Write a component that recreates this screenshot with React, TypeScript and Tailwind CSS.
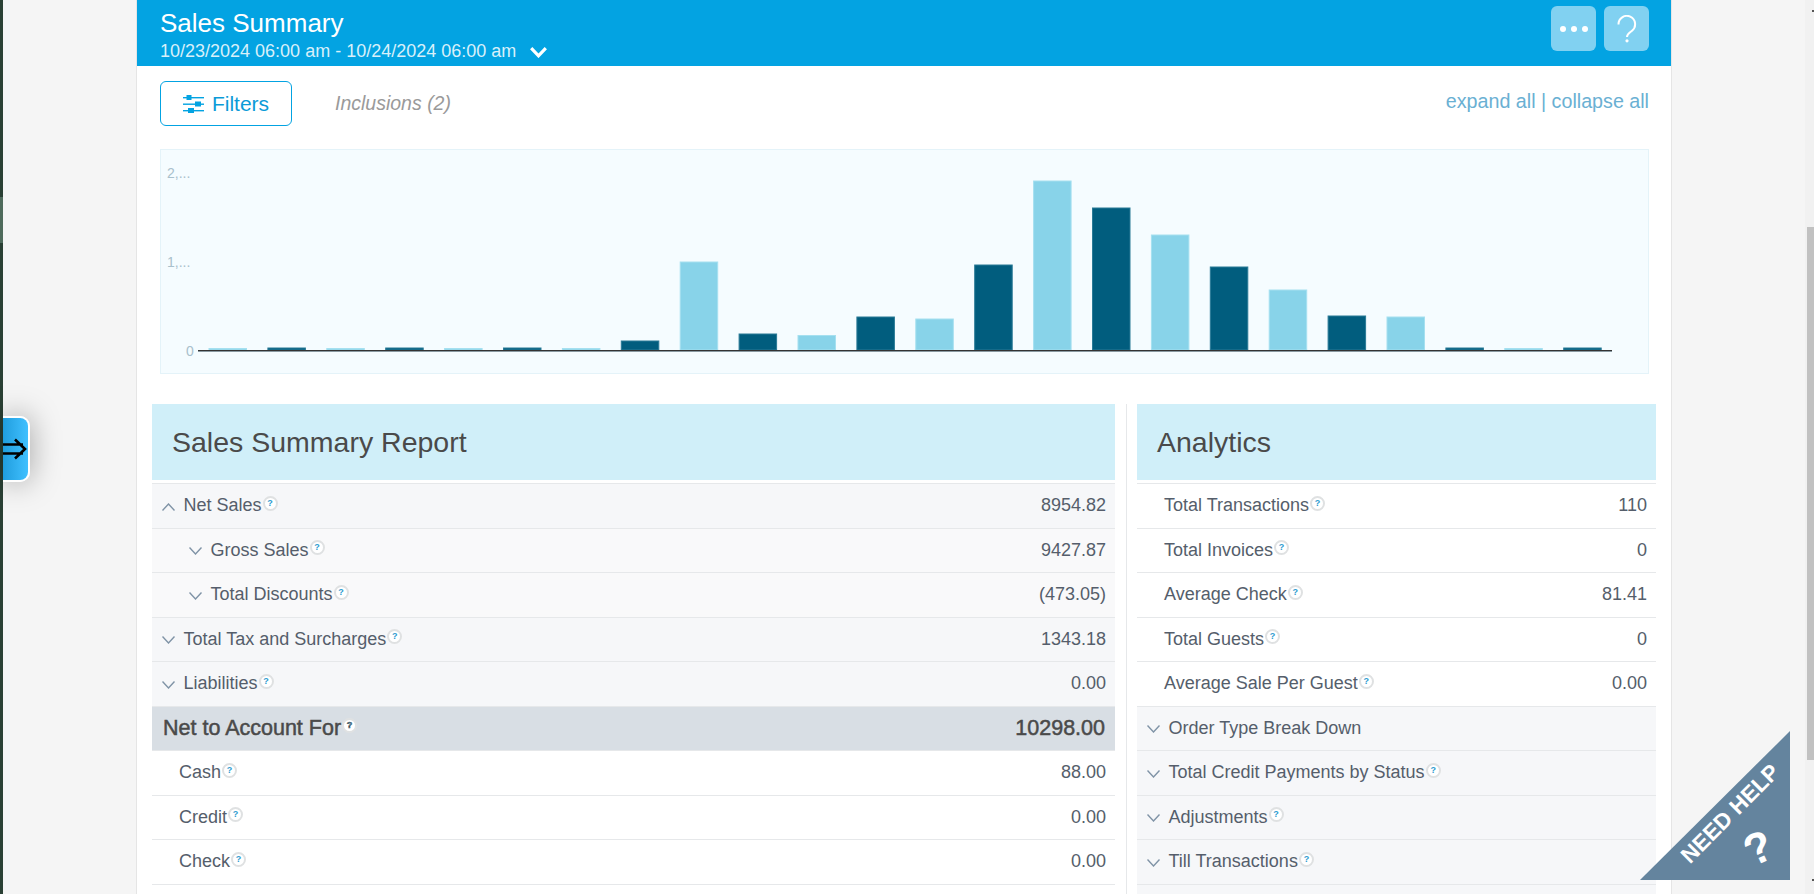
const bars = [1.5, 2, 1.5, 2, 1.5, 2, 1.5, 9, 88, 16, 14.5, 33, 31, 85, 169, 142, 115, 83, 60, 34, 33, 2, 1.5, 2];

function Chevron({ up = false }: { up?: boolean }) {
  return (
    <svg width="13" height="8" viewBox="0 0 13 8" className="mr-[8.5px] mt-[2px] shrink-0" fill="none" stroke="#7f93a6" strokeWidth="1.4">
      <polyline points={up ? '0.5,7.5 6.5,1 12.5,7.5' : '0.5,0.5 6.5,7 12.5,0.5'} />
    </svg>
  );
}

function HelpDot() {
  return (
    <span className="ml-[1px] mb-[5px] inline-flex h-[15px] w-[15px] items-center justify-center rounded-full border-2 border-[#dfe1e2] bg-white text-[9px] font-bold leading-none text-[#2e9bd0]">
      ?
    </span>
  );
}

function Row({
  label,
  value,
  tone = 'white',
  chevron,
  indent = 0,
  help = true,
}: {
  label: string;
  value?: string;
  tone?: 'white' | 'gray' | 'light';
  chevron?: 'up' | 'down';
  indent?: number;
  help?: boolean;
}) {
  const bg = tone === 'gray' ? 'bg-[#f6f7f9]' : tone === 'light' ? 'bg-[#f9f9fa]' : 'bg-white';
  return (
    <div className={`flex h-[44.5px] items-center justify-between border-b border-[#e6e8ea] pr-[9px] text-[18px] text-[#555e6b] ${bg}`}>
      <div className={`flex items-center ${indent === 1 ? 'pl-[37px]' : indent === 2 ? 'pl-[27px]' : 'pl-[10px]'}`}>
        {chevron && <Chevron up={chevron === 'up'} />}
        <span>{label}</span>
        {help && <HelpDot />}
      </div>
      {value && <span>{value}</span>}
    </div>
  );
}

export default function App() {
  return (
    <div className="relative flex h-[894px] w-[1814px] overflow-hidden bg-[#f5f5f5] font-['Liberation_Sans',sans-serif]">
      {/* window edge */}
      <div className="w-[3px] shrink-0 bg-[#2a4034] pt-[197px]">
        <div className="h-[46px] bg-[#4f6b5c]" />
      </div>
      <div className="w-[133px] shrink-0" />

      {/* main card */}
      <main className="flex w-[1536px] shrink-0 flex-col border-x border-[#e5e5e5] bg-white">
        <header className="flex h-[66px] shrink-0 items-start justify-between bg-[#03a3e2] pl-[23px] pr-[22px] text-white">
          <div>
            <h1 className="mt-[7px] text-[26px] leading-[32px]">Sales Summary</h1>
            <div className="mt-[1px] flex items-center text-[18px] leading-[22px] text-[#d8f0fa]">
              10/23/2024 06:00 am - 10/24/2024 06:00 am
              <svg width="17" height="11" viewBox="0 0 17 11" className="ml-[14px] mt-[2px]" fill="none" stroke="#fff" strokeWidth="3.2">
                <polyline points="1.2,1.2 8.5,8.8 15.8,1.2" />
              </svg>
            </div>
          </div>
          <div className="mt-[6px] flex gap-[8px]">
            <button className="flex h-[45px] w-[45px] items-center justify-center gap-[5px] rounded-[6px] bg-[#81d1f1]">
              <span className="h-[6px] w-[6px] rounded-full bg-white" />
              <span className="h-[6px] w-[6px] rounded-full bg-white" />
              <span className="h-[6px] w-[6px] rounded-full bg-white" />
            </button>
            <button className="flex h-[45px] w-[45px] items-center justify-center rounded-[6px] bg-[#81d1f1]">
              <svg width="20" height="28" viewBox="0 0 20 28" fill="none" stroke="#fff" strokeWidth="2">
                <path d="M1.5 9.5a8.3 8.3 0 1 1 13.5 6.2c-3 2.4-5 3.4-5 6.3" />
                <circle cx="10" cy="25.8" r="1.6" fill="#fff" stroke="none" />
              </svg>
            </button>
          </div>
        </header>

        <div className="flex h-[83px] shrink-0 items-start justify-between pl-[23px] pr-[22px] pt-[15px]">
          <div className="flex items-center">
            <button className="flex h-[45px] w-[132px] items-center justify-center gap-[8px] rounded-[6px] border border-[#03a3e2] text-[21px] text-[#0b9bd8]">
              <svg width="21" height="20" viewBox="0 0 21 20" fill="#03a3e2" stroke="none">
                <rect x="0" y="3" width="21" height="1.4" />
                <rect x="0" y="9.5" width="21" height="1.4" />
                <rect x="0" y="16" width="21" height="1.4" />
                <rect x="3.5" y="1" width="5" height="5" />
                <rect x="12" y="7.5" width="6" height="5" />
                <rect x="5" y="14" width="6" height="5" />
              </svg>
              Filters
            </button>
            <span className="ml-[43px] text-[19.5px] italic text-[#9a9a9a]">Inclusions (2)</span>
          </div>
          <div className="pt-[6px] text-[19.7px] text-[#6ab0d3]">expand all | collapse all</div>
        </div>

        <div className="ml-[23px] h-[225px] w-[1489px] shrink-0 border border-[#e4f3f9] bg-[#f5fcff]">
          <svg width="1487" height="223" viewBox="161 150 1487 223">
            <text x="167" y="178" fontSize="14" fill="#a9c0cc">2,...</text>
            <text x="167" y="267" fontSize="14" fill="#a9c0cc">1,...</text>
            <text x="186" y="356" fontSize="14" fill="#a9c0cc">0</text>
            {bars.map((h, i) => (
              <rect
                key={i}
                x={209 + i * 58.9}
                y={350 - h}
                width={37.5}
                height={h}
                fill={i % 2 === 0 ? '#88d3e9' : '#015d7e'}
                stroke={i % 2 === 0 ? '#a5e0f0' : '#2a7a96'}
                strokeWidth="1"
              />
            ))}
            <line x1="198" x2="1612" y1="350.5" y2="350.5" stroke="#333" strokeWidth="1" />
            <line x1="198" x2="1612" y1="351.5" y2="351.5" stroke="#8a9aa2" strokeWidth="1" />
          </svg>
        </div>

        <div className="mt-[30px] flex shrink-0">
          <section className="ml-[15px] w-[963px]">
            <div className="flex h-[76px] items-center bg-[#d0eff9] pl-[20px] text-[28.5px] text-[#4a4a4a]">Sales Summary Report</div>
            <div className="mt-[3px] border-t border-[#e6e8ea]">
              <Row label="Net Sales" value="8954.82" tone="gray" chevron="up" />
              <Row label="Gross Sales" value="9427.87" tone="light" chevron="down" indent={1} />
              <Row label="Total Discounts" value="(473.05)" tone="light" chevron="down" indent={1} />
              <Row label="Total Tax and Surcharges" value="1343.18" tone="gray" chevron="down" />
              <Row label="Liabilities" value="0.00" tone="gray" chevron="down" />
              <div className="flex h-[44.5px] items-center justify-between border-b border-[#e6e8ea] bg-[#d8dee4] pl-[11px] pr-[10px] text-[21.5px] text-[#4a4a4a] [-webkit-text-stroke:0.5px_#4a4a4a]">
                <div className="flex items-center">
                  Net to Account For
                  <HelpDot />
                </div>
                <span>10298.00</span>
              </div>
              <Row label="Cash" value="88.00" indent={2} />
              <Row label="Credit" value="0.00" indent={2} />
              <Row label="Check" value="0.00" indent={2} />
              <div className="h-[12px] bg-white" />
            </div>
          </section>

          <div className="ml-[11px] w-px self-stretch bg-[#e6e8ea]" />

          <section className="ml-[10px] w-[519px]">
            <div className="flex h-[76px] items-center bg-[#d0eff9] pl-[20px] text-[28.5px] text-[#4a4a4a]">Analytics</div>
            <div className="mt-[3px] border-t border-[#e6e8ea]">
              <Row label="Total Transactions" value="110" indent={2} />
              <Row label="Total Invoices" value="0" indent={2} />
              <Row label="Average Check" value="81.41" indent={2} />
              <Row label="Total Guests" value="0" indent={2} />
              <Row label="Average Sale Per Guest" value="0.00" indent={2} />
              <Row label="Order Type Break Down" tone="gray" chevron="down" help={false} />
              <Row label="Total Credit Payments by Status" tone="gray" chevron="down" />
              <Row label="Adjustments" tone="gray" chevron="down" />
              <Row label="Till Transactions" tone="gray" chevron="down" />
              <div className="h-[12px] bg-[#f6f7f9]" />
            </div>
          </section>
        </div>
      </main>

      <div className="flex-1" />

      {/* scrollbar */}
      <div className="w-[9px] shrink-0 bg-[#f1f1f1] pt-[227px]">
        <div className="ml-[2px] h-[533px] bg-[#c1c1c1]" />
      </div>
      <span className="absolute left-[1812px] top-[10px] h-[2px] w-[2px] bg-[#555]" />
      <span className="absolute left-[1812px] top-[879px] h-[2px] w-[2px] bg-[#555]" />

      {/* side tab */}
      <div className="absolute left-[3px] top-[416px] flex h-[66px] w-[27px] items-center overflow-hidden rounded-r-[10px] border-2 border-l-0 border-white bg-gradient-to-r from-[#1f9ede] to-[#40c0ff] shadow-[0_0_30px_rgba(0,0,0,0.35)]">
        <svg width="25" height="22" viewBox="0 0 25 22" fill="none" stroke="#000" strokeWidth="2.6">
          <path d="M0 6.5H20M0 15.5H20M12 1.5L22 11L12 20.5" />
        </svg>
      </div>

      {/* need help corner */}
      <div className="absolute left-[1640px] top-[731px] h-[149px] w-[150px] bg-[#64849e] [clip-path:polygon(100%_0,100%_100%,0_100%)]">
        <span className="absolute left-[26px] top-[66px] block rotate-[-45deg] whitespace-nowrap text-[22.5px] font-bold text-white">NEED HELP</span>
        <span className="absolute left-[105px] top-[95px] block rotate-[-25deg] text-[44px] font-bold leading-none text-white">?</span>
      </div>
    </div>
  );
}
